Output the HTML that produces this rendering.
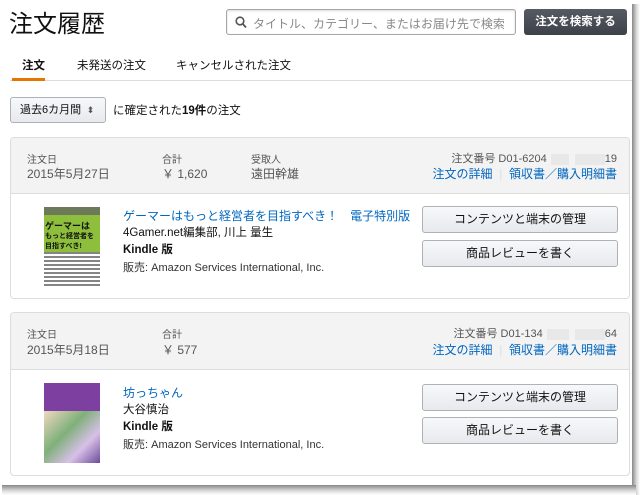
<!DOCTYPE html>
<html><head><meta charset="utf-8"><style>
*{margin:0;padding:0;box-sizing:border-box}
body{width:640px;height:495px;background:#fff;font-family:"Liberation Sans","Noto Sans CJK JP",sans-serif;color:#111;position:relative;overflow:hidden;font-size:11px}
.a{position:absolute;white-space:nowrap}
.shr{position:absolute;left:632px;top:4px;width:8px;height:491px;background:linear-gradient(90deg,#888,#ddd 60%,#fff)}
.shb{position:absolute;left:2px;top:485px;width:634px;height:10px;background:linear-gradient(180deg,#888,#ddd 60%,#fff)}
.card{position:absolute;left:10px;width:620px;border:1px solid #ddd;border-radius:4px;overflow:hidden}
.hd{background:#f3f3f3;border-bottom:1px solid #ddd;position:absolute;left:0;top:0;width:100%}
.lb{color:#555;font-size:10px}
.vl{color:#555;font-size:12px}
.lk{color:#0066c0}
.on{right:12px;color:#555;font-size:11px}
.btn{position:absolute;left:411px;width:196px;height:27px;border:1px solid #adb1b8;border-radius:3px;background:linear-gradient(#f7f8fa,#e7e9ec);text-align:center;line-height:25px;font-size:12px;color:#111}
.blur{display:inline-block;background:#e8e8e8;height:11px;vertical-align:middle}
</style></head><body>
<div class="a" style="left:9px;top:4px;font-size:24px;color:#111">注文履歴</div>
<div class="a" style="left:226px;top:9px;width:290px;height:26px;border:1px solid #a6a6a6;border-radius:3px;box-shadow:inset 0 1px 2px rgba(0,0,0,.15)">
<svg class="a" style="left:8px;top:6px" width="12" height="13" viewBox="0 0 12 13"><circle cx="5" cy="5" r="3.8" fill="none" stroke="#555" stroke-width="1.6"/><path d="M7.7 7.8L11 11.5" stroke="#555" stroke-width="1.8"/></svg>
<span class="a" style="left:26px;top:5px;font-size:12px;color:#888">タイトル、カテゴリー、またはお届け先で検索</span></div>
<div class="a" style="left:524px;top:9px;width:103px;height:26px;background:linear-gradient(#565b63,#3d4148);border-radius:3px;color:#fff;font-weight:bold;font-size:11.5px;text-align:center;line-height:26px">注文を検索する</div>
<div class="a" style="left:22px;top:57px;font-size:11.5px;font-weight:bold">注文</div>
<div class="a" style="left:77px;top:57px;font-size:11.5px">未発送の注文</div>
<div class="a" style="left:176px;top:57px;font-size:11.5px">キャンセルされた注文</div>
<div class="a" style="left:10px;top:80px;width:622px;height:1px;background:#ddd"></div>
<div class="a" style="left:12px;top:78px;width:33px;height:3px;background:#e77600"></div>
<div class="a" style="left:10px;top:97px;width:96px;height:26px;border:1px solid #adb1b8;border-radius:3px;background:linear-gradient(#f7f8fa,#e7e9ec);font-size:11px;line-height:24px;padding-left:9px">過去6カ月間 <span style="font-size:9px;color:#555">&nbsp;⬍</span></div>
<div class="a" style="left:113px;top:102px;font-size:11.5px">に確定された<b>19件</b>の注文</div>

<div class="card" style="top:137px;height:162px">
<div class="hd" style="height:56px"></div>
<div class="a lb" style="left:16px;top:13px">注文日</div>
<div class="a vl" style="left:16px;top:27px">2015年5月27日</div>
<div class="a lb" style="left:151px;top:13px">合計</div>
<div class="a vl" style="left:151px;top:27px">￥ 1,620</div>
<div class="a lb" style="left:240px;top:13px">受取人</div>
<div class="a vl" style="left:240px;top:27px">遠田幹雄</div>
<div class="a on" style="top:12px">注文番号 D01-6204<span class="blur" style="width:18px;margin-left:4px"></span><span class="blur" style="width:30px;margin-left:6px"></span>19</div>
<div class="a lk" style="right:12px;top:27px;font-size:12px">注文の詳細 <span style="color:#ddd">&nbsp;|&nbsp;</span> 領収書／購入明細書</div>
<div class="a" style="left:33px;top:69px;width:56px;height:81px;background:#fff">
<div style="height:8px;background:#6d7a5a"></div>
<div style="height:37px;background:#8dbe3c;color:#111;font-weight:bold;font-size:9px;line-height:9px;padding:7px 1px 0">ゲーマーは<br><span style="font-size:7px">もっと経営者を<br>目指すべき!</span></div>
<div style="height:36px;background:repeating-linear-gradient(180deg,#333 0 2px,#fff 2px 4px);opacity:.6"></div></div>
<div class="a lk" style="left:112px;top:69px;font-size:12px">ゲーマーはもっと経営者を目指すべき！　電子特別版</div>
<div class="a" style="left:112px;top:86px;font-size:11.5px">4Gamer.net編集部, 川上 量生</div>
<div class="a" style="left:112px;top:103px;font-size:11.5px;font-weight:bold">Kindle 版</div>
<div class="a" style="left:112px;top:121px;font-size:11px;color:#333">販売: Amazon Services International, Inc.</div>
<div class="btn" style="top:68px">コンテンツと端末の管理</div>
<div class="btn" style="top:102px">商品レビューを書く</div>
</div>

<div class="card" style="top:312px;height:164px">
<div class="hd" style="height:57px"></div>
<div class="a lb" style="left:16px;top:13px">注文日</div>
<div class="a vl" style="left:16px;top:28px">2015年5月18日</div>
<div class="a lb" style="left:151px;top:13px">合計</div>
<div class="a vl" style="left:151px;top:28px">￥ 577</div>
<div class="a on" style="top:12px">注文番号 D01-134<span class="blur" style="width:22px;margin-left:4px"></span><span class="blur" style="width:30px;margin-left:6px"></span>64</div>
<div class="a lk" style="right:12px;top:28px;font-size:12px">注文の詳細 <span style="color:#ddd">&nbsp;|&nbsp;</span> 領収書／購入明細書</div>
<div class="a" style="left:33px;top:70px;width:56px;height:80px">
<div style="height:28px;background:#7d3fa0"></div>
<div style="height:52px;background:linear-gradient(135deg,#f0d8c0,#7fb07a 40%,#d8c0e8 70%,#6a4c9a)"></div></div>
<div class="a lk" style="left:112px;top:71px;font-size:12px">坊っちゃん</div>
<div class="a" style="left:112px;top:88px;font-size:11.5px">大谷慎治</div>
<div class="a" style="left:112px;top:105px;font-size:11.5px;font-weight:bold">Kindle 版</div>
<div class="a" style="left:112px;top:123px;font-size:11px;color:#333">販売: Amazon Services International, Inc.</div>
<div class="btn" style="top:71px">コンテンツと端末の管理</div>
<div class="btn" style="top:104px">商品レビューを書く</div>
</div>
<div class="shr"></div><div class="shb"></div>
</body></html>
